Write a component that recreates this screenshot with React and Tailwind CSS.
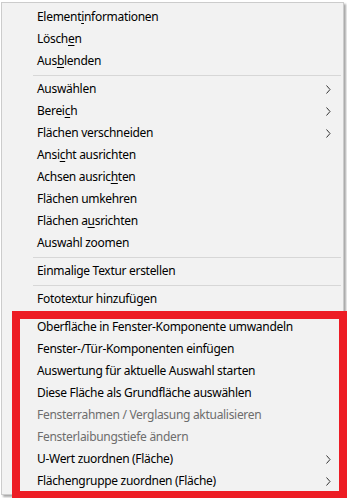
import React from 'react';

const items = [
  { label: 'Element', u: 'i', rest: 'nformationen' },
  { label: 'Lösch', u: 'e', rest: 'n' },
  { label: 'Aus', u: 'b', rest: 'lenden' },
  { sep: true },
  { label: 'Auswählen', sub: true },
  { label: 'Berei', u: 'c', rest: 'h', sub: true },
  { label: 'Flächen verschneiden', sub: true },
  { label: 'Ansi', u: 'c', rest: 'ht ausrichten' },
  { label: 'Achsen ausric', u: 'h', rest: 'ten' },
  { label: 'Flächen umkehren' },
  { label: 'Flächen a', u: 'u', rest: 'srichten' },
  { label: 'Auswahl zoomen' },
  { sep: true },
  { label: 'Einmalige Textur erstellen' },
  { sep: true },
  { label: 'Fototextur hinzufügen' },
  { sep: true },
  { label: 'Oberfläche in Fenster-Komponente umwandeln' },
  { label: 'Fenster-/Tür-Komponenten einfügen' },
  { label: 'Auswertung für aktuelle Auswahl starten' },
  { label: 'Diese Fläche als Grundfläche auswählen' },
  { label: 'Fensterrahmen / Verglasung aktualisieren', disabled: true },
  { label: 'Fensterlaibungstiefe ändern', disabled: true },
  { label: 'U-Wert zuordnen (Fläche)', sub: true },
  { label: 'Flächengruppe zuordnen (Fläche)', sub: true },
];

const Chevron = () => (
  <svg width="5" height="9" viewBox="0 0 5 9" className="text-[#333333]">
    <path d="M0.5 0.5 L4 4.5 L0.5 8.5" fill="none" stroke="currentColor" strokeWidth="1" />
  </svg>
);

const MenuItem = ({ item }) => (
  <div className="h-[22px] flex items-center pl-[35px] pr-[12px] justify-between">
    <span className={item.disabled ? 'text-[#6d6d6d]' : 'text-black'}>
      {item.label}
      {item.u && <span className="underline underline-offset-2">{item.u}</span>}
      {item.rest}
    </span>
    {item.sub && <Chevron />}
  </div>
);

export default function App() {
  return (
    <div className="relative w-[347px] h-[498px] bg-white overflow-hidden">
      <div
        className="ml-px mt-[2px] w-[343px] bg-[#f2f2f2] border border-[#cccccc] shadow-[2px_2px_2px_rgba(0,0,0,0.35)] pt-[3px] pb-[2px] text-[12px] leading-none tracking-[-0.3px]"
        style={{ fontFamily: '"Noto Sans", sans-serif' }}
      >
        {items.map((item, i) =>
          item.sep ? (
            <div key={i} className="h-[6px] flex items-center pl-[31px] pr-[2px]">
              <div className="h-px w-full bg-[#d7d7d7]" />
            </div>
          ) : (
            <MenuItem key={i} item={item} />
          )
        )}
      </div>
      <div className="absolute left-[12px] top-[311px] w-[335px] h-[188px] border-[8px] border-[#ed1c24]" />
    </div>
  );
}
